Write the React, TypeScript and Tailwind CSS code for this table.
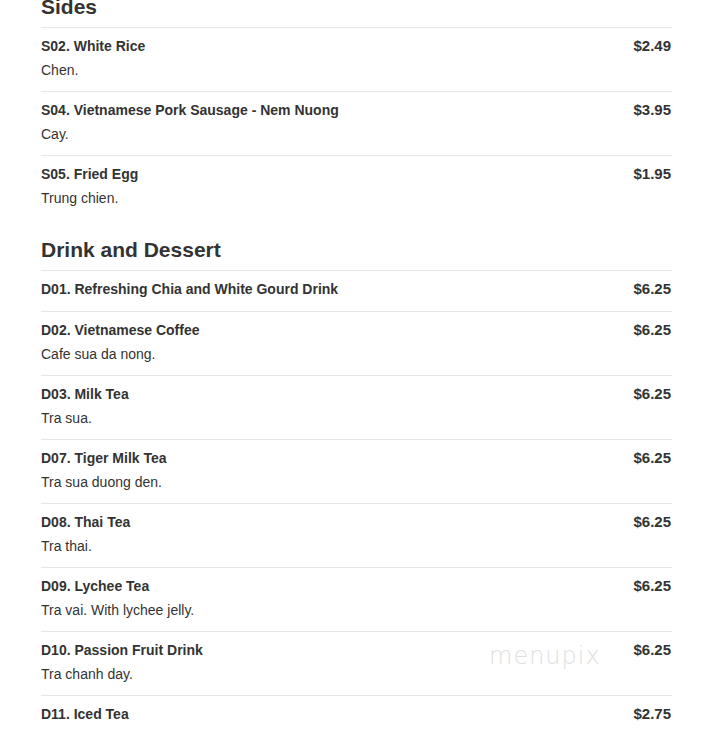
import React from 'react';

interface MenuItem {
  name: string;
  price: string;
  description?: string;
}

interface MenuSection {
  title: string;
  items: MenuItem[];
}

const sections: MenuSection[] = [
  {
    title: 'Sides',
    items: [
      { name: 'S02. White Rice', price: '$2.49', description: 'Chen.' },
      { name: 'S04. Vietnamese Pork Sausage - Nem Nuong', price: '$3.95', description: 'Cay.' },
      { name: 'S05. Fried Egg', price: '$1.95', description: 'Trung chien.' },
    ],
  },
  {
    title: 'Drink and Dessert',
    items: [
      { name: 'D01. Refreshing Chia and White Gourd Drink', price: '$6.25' },
      { name: 'D02. Vietnamese Coffee', price: '$6.25', description: 'Cafe sua da nong.' },
      { name: 'D03. Milk Tea', price: '$6.25', description: 'Tra sua.' },
      { name: 'D07. Tiger Milk Tea', price: '$6.25', description: 'Tra sua duong den.' },
      { name: 'D08. Thai Tea', price: '$6.25', description: 'Tra thai.' },
      { name: 'D09. Lychee Tea', price: '$6.25', description: 'Tra vai. With lychee jelly.' },
      { name: 'D10. Passion Fruit Drink', price: '$6.25', description: 'Tra chanh day.' },
      { name: 'D11. Iced Tea', price: '$2.75' },
    ],
  },
];

function Row({ item }: { item: MenuItem }) {
  return (
    <div className={`border-t border-[#e6e6e6] pt-[8px] ${item.description ? 'pb-[11px]' : 'pb-[12px]'}`}>
      <div className="flex items-start justify-between">
        <span className="font-bold text-[14px] leading-[20px]">{item.name}</span>
        <span className="pr-[1px] font-bold text-[15px] leading-[20px]">{item.price}</span>
      </div>
      {item.description && (
        <p className="mt-[4px] text-[14px] leading-[20px] text-[#333]">{item.description}</p>
      )}
    </div>
  );
}

export default function App() {
  return (
    <div className="relative h-[740px] overflow-hidden bg-white font-['Liberation_Sans',Arial,sans-serif] text-[#333]">
      <div className="ml-[41px] w-[631px] -mt-[7px]">
        {sections.map((section, i) => (
          <section key={section.title} className={i > 0 ? 'mt-[17px]' : ''}>
            <h2 className="mb-[6px] text-[21px] font-bold leading-[28px]">{section.title}</h2>
            {section.items.map((item) => (
              <Row key={item.name} item={item} />
            ))}
          </section>
        ))}
      </div>

      {/* watermark */}
      <span className="absolute left-[489px] top-[638px] font-['DejaVu_Sans',sans-serif] text-[24px] font-extralight tracking-[1px] text-[#e0e0e0]">
        menupix
      </span>
    </div>
  );
}
